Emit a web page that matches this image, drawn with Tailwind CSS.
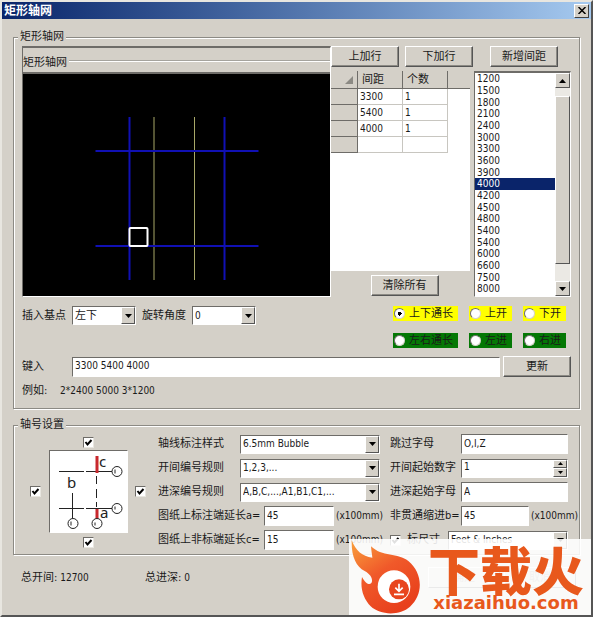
<!DOCTYPE html>
<html lang="zh-CN">

<head>
    <meta charset="UTF-8">
    <meta name="viewport" content="width=device-width, initial-scale=1.0">
    <title>矩形轴网</title>
    <script src="https://cdn.jsdelivr.net/npm/@tailwindcss/browser@4"></script>
</head>

<body class="bg-[#d4d0c8] font-['DejaVu_Sans_Condensed','Noto_Sans_CJK_SC',sans-serif] text-[10px] leading-[14px] text-[#1a1a1a]">

    <div class="relative min-h-screen flex flex-col border-2 border-t-[#e8e6e0] border-l-[#e8e6e0] border-r-[#555] border-b-[#555] overflow-hidden">

        <!-- title bar -->
        <header class="flex items-center justify-between h-[17px] pl-0.5 pr-0.5 bg-linear-to-r from-[#0a246a] to-[#a6caf0]">
            <h1 class="text-white font-bold text-[12px]">矩形轴网</h1>
            <button title="关闭" class="w-[15px] h-[14px] bg-[#d4d0c8] border border-t-white border-l-white border-r-[#404040] border-b-[#404040] flex items-center justify-center">
                <svg class="w-2 h-[7px]" viewBox="0 0 8 7" stroke="#000" stroke-width="1.5"><path d="M.5 0l7 7M7.5 0l-7 7" /></svg>
            </button>
        </header>

        <main class="px-[11px] pt-[11px]">

            <fieldset class="min-w-0 border border-[#8c8a84] shadow-[1px_1px_0_#fff,inset_1px_1px_0_#fff] px-2 pt-0.5 pb-2.5">
                <legend class="bg-[#d4d0c8] text-[11px] -ml-1 px-0.5">矩形轴网</legend>

                <div class="flex h-[251px]">
                    <!-- preview -->
                    <div class="flex-1 flex flex-col border border-t-2 border-t-[#6e6c68] border-l-[#6e6c68] border-r-white border-b-white">
                        <div class="h-[26px] flex items-end border-b-2 border-[#6e6c68] pb-0.5">
                            <span class="text-[11px]">矩形轴网</span>
                            <span class="flex-1 ml-0.5 mb-2 h-0.5 bg-[#a5a39d] border-b border-white"></span>
                        </div>
                        <svg class="flex-1 min-h-0 w-full bg-black" viewBox="0 0 306 222" fill="none">
                            <path d="M130.500 43v163M171 43v163" stroke="#a8a868" />
                            <path d="M106 43v163M201 43v163M72 77h163M72 172h163" stroke="#1010b4" stroke-width="2" />
                            <rect x="106" y="154" width="18" height="18" rx="1" fill="#000" stroke="#fff" stroke-width="2" />
                        </svg>
                    </div>

                    <div class="w-[240px] flex flex-col">
                        <div class="flex h-[25px] items-start text-[11px]">
                            <button class="w-[68px] h-[21px] border border-t-white border-l-white border-r-[#555] border-b-[#555] shadow-[inset_-1px_-1px_0_#8c8a84]">上加行</button>
                            <button class="w-[68px] h-[21px] ml-1.5 border border-t-white border-l-white border-r-[#555] border-b-[#555] shadow-[inset_-1px_-1px_0_#8c8a84]">下加行</button>
                            <button class="w-[68px] h-[21px] ml-[17px] border border-t-white border-l-white border-r-[#555] border-b-[#555] shadow-[inset_-1px_-1px_0_#8c8a84]">新增间距</button>
                        </div>
                        <div class="flex flex-1 min-h-0 justify-between">
                            <div class="w-[139px] flex flex-col items-center">
                                <div class="bg-white w-full h-[200px]">
                                    <table class="w-full table-fixed border-separate border-spacing-0 text-left">
                                        <thead>
                                            <tr class="h-[18px] bg-[#d4d0c8] text-[11px] *:font-normal *:border-b *:border-r *:border-[#6e6c68]">
                                                <th class="w-[27px]"><svg class="w-2 h-2 ml-auto mr-1" viewBox="0 0 8 8"><path d="M8 0v8H0z" fill="#8c8a84" /></svg></th>
                                                <th class="w-[45px] pl-1">间距</th>
                                                <th class="w-[45px] pl-1">个数</th>
                                                <th class="border-r-0!"></th>
                                            </tr>
                                        </thead>
                                        <tbody>
                                            <tr class="h-4 *:border-b *:border-r *:border-[#c8c6c0]">
                                                <td class="bg-[#d4d0c8] border-[#6e6c68]!"></td><td class="pl-0.5">3300</td><td class="pl-0.5">1</td><td class="border-0!"></td>
                                            </tr>
                                            <tr class="h-4 *:border-b *:border-r *:border-[#c8c6c0]">
                                                <td class="bg-[#d4d0c8] border-[#6e6c68]!"></td><td class="pl-0.5">5400</td><td class="pl-0.5">1</td><td class="border-0!"></td>
                                            </tr>
                                            <tr class="h-4 *:border-b *:border-r *:border-[#c8c6c0]">
                                                <td class="bg-[#d4d0c8] border-[#6e6c68]!"></td><td class="pl-0.5">4000</td><td class="pl-0.5">1</td><td class="border-0!"></td>
                                            </tr>
                                            <tr class="h-4 *:border-b *:border-r *:border-[#c8c6c0]">
                                                <td class="bg-[#d4d0c8] border-[#6e6c68]!"></td><td></td><td></td><td class="border-0!"></td>
                                            </tr>
                                        </tbody>
                                    </table>
                                </div>
                                <button class="w-[68px] h-[21px] mt-1 ml-2 text-[11px] border border-t-white border-l-white border-r-[#555] border-b-[#555] shadow-[inset_-1px_-1px_0_#8c8a84]">清除所有</button>
                            </div>

                            <!-- spacing list -->
                            <div class="w-[97px] flex bg-white border border-t-2 border-t-[#6e6c68] border-l-[#6e6c68] border-r-white border-b-white">
                                <select size="19" aria-label="间距" class="flex-1 min-w-0 h-full p-0 overflow-hidden appearance-none outline-none leading-[12px] *:h-3 *:nth-[3n]:h-[11px] *:min-h-0 *:p-0 *:pl-0.5">
                                    <option>1200</option>
                                    <option>1500</option>
                                    <option>1800</option>
                                    <option>2100</option>
                                    <option>2400</option>
                                    <option>3000</option>
                                    <option>3300</option>
                                    <option>3600</option>
                                    <option>3900</option>
                                    <option class="bg-[#0a246a] text-white">4000</option>
                                    <option>4200</option>
                                    <option>4500</option>
                                    <option>4800</option>
                                    <option>5400</option>
                                    <option>5400</option>
                                    <option>6000</option>
                                    <option>6600</option>
                                    <option>7500</option>
                                    <option>8000</option>
                                </select>
                                <div class="w-[15px] flex flex-col bg-[#ebe9e4]">
                                    <button aria-label="向上" class="h-[15px] flex items-center justify-center bg-[#d4d0c8] border border-t-white border-l-white border-r-[#555] border-b-[#555]"><svg class="w-[7px] h-1" viewBox="0 0 7 4"><path d="M3.500 0L7 4H0z" /></svg></button>
                                    <div class="h-[168px] mt-2 bg-[#d4d0c8] border border-t-white border-l-white border-r-[#555] border-b-[#555]"></div>
                                    <button aria-label="向下" class="h-[15px] mt-auto flex items-center justify-center bg-[#d4d0c8] border border-t-white border-l-white border-r-[#555] border-b-[#555]"><svg class="w-[7px] h-1" viewBox="0 0 7 4"><path d="M0 0h7L3.500 4z" /></svg></button>
                                </div>
                            </div>
                        </div>
                    </div>
                </div>

                <div class="flex justify-between mt-[9px]">
                    <div class="flex items-center h-[19px] text-[11px]">
                        <label for="basePoint" class="w-[50px]">插入基点</label>
                        <div class="relative w-16 h-[19px]">
                            <select id="basePoint" class="appearance-none w-full h-full pl-0.5 bg-white border border-t-[#6e6c68] border-l-[#6e6c68] border-r-white border-b-white"><option>左下</option></select>
                            <span class="absolute right-px top-px bottom-px w-3.5 bg-[#d4d0c8] border border-t-white border-l-white border-r-[#555] border-b-[#555] flex items-center justify-center pointer-events-none"><svg class="w-[7px] h-1" viewBox="0 0 7 4"><path d="M0 0h7L3.500 4z" /></svg></span>
                        </div>
                        <label for="angle" class="w-[50px] ml-1.5">旋转角度</label>
                        <div class="relative w-16 h-[19px]">
                            <select id="angle" class="appearance-none w-full h-full pl-0.5 text-[10px] bg-white border border-t-[#6e6c68] border-l-[#6e6c68] border-r-white border-b-white"><option>0</option></select>
                            <span class="absolute right-px top-px bottom-px w-3.5 bg-[#d4d0c8] border border-t-white border-l-white border-r-[#555] border-b-[#555] flex items-center justify-center pointer-events-none"><svg class="w-[7px] h-1" viewBox="0 0 7 4"><path d="M0 0h7L3.500 4z" /></svg></span>
                        </div>
                    </div>

                    <div class="grid grid-cols-[65px_43px_43px] gap-y-3 w-[173px] mr-[5px] text-[11px] *:h-[15px] *:flex *:items-center *:gap-1 *:pl-px *:whitespace-nowrap justify-between">
                        <label class="bg-[#ffff00]"><input type="radio" name="dir" checked class="appearance-none w-[11px] h-[11px] rounded-full bg-white border border-t-[#6e6c68] border-l-[#6e6c68] border-r-[#d4d0c8] border-b-[#d4d0c8] checked:bg-[radial-gradient(#000_2px,#fff_2px)]">上下通长</label>
                        <label class="bg-[#ffff00]"><input type="radio" name="dir" class="appearance-none w-[11px] h-[11px] rounded-full bg-white border border-t-[#6e6c68] border-l-[#6e6c68] border-r-[#d4d0c8] border-b-[#d4d0c8] checked:bg-[radial-gradient(#000_2px,#fff_2px)]">上开</label>
                        <label class="bg-[#ffff00]"><input type="radio" name="dir" class="appearance-none w-[11px] h-[11px] rounded-full bg-white border border-t-[#6e6c68] border-l-[#6e6c68] border-r-[#d4d0c8] border-b-[#d4d0c8] checked:bg-[radial-gradient(#000_2px,#fff_2px)]">下开</label>
                        <label class="bg-[#047804]"><input type="radio" name="dir" class="appearance-none w-[11px] h-[11px] rounded-full bg-white border border-t-[#6e6c68] border-l-[#6e6c68] border-r-[#d4d0c8] border-b-[#d4d0c8] checked:bg-[radial-gradient(#000_2px,#fff_2px)]">左右通长</label>
                        <label class="bg-[#047804]"><input type="radio" name="dir" class="appearance-none w-[11px] h-[11px] rounded-full bg-white border border-t-[#6e6c68] border-l-[#6e6c68] border-r-[#d4d0c8] border-b-[#d4d0c8] checked:bg-[radial-gradient(#000_2px,#fff_2px)]">左进</label>
                        <label class="bg-[#047804]"><input type="radio" name="dir" class="appearance-none w-[11px] h-[11px] rounded-full bg-white border border-t-[#6e6c68] border-l-[#6e6c68] border-r-[#d4d0c8] border-b-[#d4d0c8] checked:bg-[radial-gradient(#000_2px,#fff_2px)]">右进</label>
                    </div>
                </div>

                <div class="flex items-center mt-2 text-[11px]">
                    <label for="entry" class="w-[50px]">键入</label>
                    <input id="entry" type="text" value="3300 5400 4000" class="flex-1 min-w-0 h-5 pl-0.5 pb-0.5 text-[10px] bg-white border border-t-[#6e6c68] border-l-[#6e6c68] border-r-white border-b-white">
                    <button class="w-[68px] h-[21px] ml-[3px] border border-t-white border-l-white border-r-[#555] border-b-[#555] shadow-[inset_-1px_-1px_0_#8c8a84]">更新</button>
                </div>

                <p class="flex items-center mt-[7px]"><span class="w-[38px] text-[11px]">例如:</span>2*2400 5000 3*1200</p>
            </fieldset>

            <fieldset class="min-w-0 mt-[9px] border border-[#8c8a84] shadow-[1px_1px_0_#fff,inset_1px_1px_0_#fff] pl-4 pr-0.5 pt-0.5 pb-[3px]">
                <legend class="bg-[#d4d0c8] text-[11px] -ml-3 px-0.5">轴号设置</legend>

                <div class="grid grid-cols-[118px_minmax(0,222fr)_minmax(0,187fr)] gap-x-[10px]">
                    <!-- which sides carry a bubble -->
                    <div class="grid grid-cols-[auto_auto_auto] grid-rows-[15px_83px_18px] justify-between justify-items-center items-center w-[116px] pt-px">
                        <label class="relative col-start-2 w-[11px] h-[11px]"><input type="checkbox" checked aria-label="上" class="peer appearance-none block w-[11px] h-[11px] bg-white border border-t-[#6e6c68] border-l-[#6e6c68] border-r-[#e8e6e0] border-b-[#e8e6e0]"><svg class="absolute inset-0 w-[11px] h-[11px] hidden peer-checked:block" viewBox="0 0 11 11" fill="none" stroke="#000" stroke-width="2"><path d="M2.500 5l2 2.500 4-4.500" /></svg></label>
                        <label class="relative row-start-2 col-start-1 w-[11px] h-[11px]"><input type="checkbox" checked aria-label="左" class="peer appearance-none block w-[11px] h-[11px] bg-white border border-t-[#6e6c68] border-l-[#6e6c68] border-r-[#e8e6e0] border-b-[#e8e6e0]"><svg class="absolute inset-0 w-[11px] h-[11px] hidden peer-checked:block" viewBox="0 0 11 11" fill="none" stroke="#000" stroke-width="2"><path d="M2.500 5l2 2.500 4-4.500" /></svg></label>
                        <div class="row-start-2 col-start-2 w-[79px] h-[83px] bg-white border border-t-[#6e6c68] border-l-[#6e6c68] border-r-white border-b-white">
                            <svg class="w-full h-full font-['Noto_Sans'] text-[15px]" viewBox="0 0 77 81" fill="none" stroke="#222">
                                <path d="M9 20.500h25M36 20.500h26M9 57.500h25M36 57.500h26M22.500 42v25M46.500 25v8M46.500 38v9M46.500 51v5" />
                                <path d="M47 5v17M47 58v10" stroke="#c8282d" stroke-width="3" />
                                <g fill="#fff">
                                    <circle cx="67" cy="20.500" r="5" />
                                    <circle cx="67" cy="57.500" r="5" />
                                    <circle cx="23" cy="72.500" r="5" />
                                    <circle cx="47" cy="72.500" r="5" />
                                </g>
                                <path d="M65 18.500v4M65 55.500v3M21 70.500v4M45 71.500v3" />
                                <g fill="#222" stroke="none">
                                    <text x="17" y="37">b</text>
                                    <text x="49" y="16">c</text>
                                    <text x="50" y="67">a</text>
                                </g>
                            </svg>
                        </div>
                        <label class="relative row-start-2 col-start-3 w-[11px] h-[11px]"><input type="checkbox" checked aria-label="右" class="peer appearance-none block w-[11px] h-[11px] bg-white border border-t-[#6e6c68] border-l-[#6e6c68] border-r-[#e8e6e0] border-b-[#e8e6e0]"><svg class="absolute inset-0 w-[11px] h-[11px] hidden peer-checked:block" viewBox="0 0 11 11" fill="none" stroke="#000" stroke-width="2"><path d="M2.500 5l2 2.500 4-4.500" /></svg></label>
                        <label class="relative row-start-3 col-start-2 w-[11px] h-[11px]"><input type="checkbox" checked aria-label="下" class="peer appearance-none block w-[11px] h-[11px] bg-white border border-t-[#6e6c68] border-l-[#6e6c68] border-r-[#e8e6e0] border-b-[#e8e6e0]"><svg class="absolute inset-0 w-[11px] h-[11px] hidden peer-checked:block" viewBox="0 0 11 11" fill="none" stroke="#000" stroke-width="2"><path d="M2.500 5l2 2.500 4-4.500" /></svg></label>
                    </div>

                    <div class="flex flex-col gap-1 *:flex *:items-center *:h-5 whitespace-nowrap">
                        <div>
                            <label for="style" class="w-[82px] text-[11px]">轴线标注样式</label>
                            <div class="relative flex-1 h-[19px]">
                                <select id="style" class="appearance-none w-full h-full pl-0.5 bg-white border border-t-[#6e6c68] border-l-[#6e6c68] border-r-white border-b-white"><option>6.5mm Bubble</option></select>
                                <span class="absolute right-px top-px bottom-px w-3.5 bg-[#d4d0c8] border border-t-white border-l-white border-r-[#555] border-b-[#555] flex items-center justify-center pointer-events-none"><svg class="w-[7px] h-1" viewBox="0 0 7 4"><path d="M0 0h7L3.500 4z" /></svg></span>
                            </div>
                        </div>
                        <div>
                            <label for="bayRule" class="w-[82px] text-[11px]">开间编号规则</label>
                            <div class="relative flex-1 h-[19px]">
                                <select id="bayRule" class="appearance-none w-full h-full pl-0.5 bg-white border border-t-[#6e6c68] border-l-[#6e6c68] border-r-white border-b-white"><option>1,2,3,...</option></select>
                                <span class="absolute right-px top-px bottom-px w-3.5 bg-[#d4d0c8] border border-t-white border-l-white border-r-[#555] border-b-[#555] flex items-center justify-center pointer-events-none"><svg class="w-[7px] h-1" viewBox="0 0 7 4"><path d="M0 0h7L3.500 4z" /></svg></span>
                            </div>
                        </div>
                        <div>
                            <label for="depthRule" class="w-[82px] text-[11px]">进深编号规则</label>
                            <div class="relative flex-1 h-[19px]">
                                <select id="depthRule" class="appearance-none w-full h-full pl-0.5 bg-white border border-t-[#6e6c68] border-l-[#6e6c68] border-r-white border-b-white"><option>A,B,C,...,A1,B1,C1,...</option></select>
                                <span class="absolute right-px top-px bottom-px w-3.5 bg-[#d4d0c8] border border-t-white border-l-white border-r-[#555] border-b-[#555] flex items-center justify-center pointer-events-none"><svg class="w-[7px] h-1" viewBox="0 0 7 4"><path d="M0 0h7L3.500 4z" /></svg></span>
                            </div>
                        </div>
                        <div>
                            <label for="extA" class="w-[106px] text-[11px]">图纸上标注端延长a=</label>
                            <input id="extA" type="text" value="45" class="flex-1 min-w-0 h-5 pl-0.5 pb-0.5 bg-white border border-t-[#6e6c68] border-l-[#6e6c68] border-r-white border-b-white">
                            <span class="w-[46px] pl-0.5">(x100mm)</span>
                        </div>
                        <div>
                            <label for="extC" class="w-[106px] text-[11px]">图纸上非标端延长c=</label>
                            <input id="extC" type="text" value="15" class="flex-1 min-w-0 h-5 pl-0.5 pb-0.5 bg-white border border-t-[#6e6c68] border-l-[#6e6c68] border-r-white border-b-white">
                            <span class="w-[46px] pl-0.5">(x100mm)</span>
                        </div>
                    </div>

                    <div class="flex flex-col gap-1 *:flex *:items-center *:h-5 whitespace-nowrap">
                        <div class="pr-[9px]">
                            <label for="skip" class="w-[71px] text-[11px]">跳过字母</label>
                            <input id="skip" type="text" value="O,I,Z" class="flex-1 min-w-0 h-5 pl-0.5 pb-0.5 bg-white border border-t-[#6e6c68] border-l-[#6e6c68] border-r-white border-b-white">
                        </div>
                        <div class="pr-[9px]">
                            <label for="bayStart" class="w-[71px] text-[11px]">开间起始数字</label>
                            <div class="flex flex-1 min-w-0 h-[19px] bg-white border border-t-[#6e6c68] border-l-[#6e6c68] border-r-white border-b-white">
                                <input id="bayStart" type="text" value="1" class="flex-1 min-w-0 pl-0.5 pb-0.5">
                                <div class="w-3.5 flex flex-col">
                                    <button aria-label="增加" class="flex-1 bg-[#d4d0c8] border border-t-white border-l-white border-r-[#555] border-b-[#555] flex items-center justify-center"><svg class="w-[5px] h-[3px]" viewBox="0 0 5 3"><path d="M2.500 0L5 3H0z" /></svg></button>
                                    <button aria-label="减少" class="flex-1 bg-[#d4d0c8] border border-t-white border-l-white border-r-[#555] border-b-[#555] flex items-center justify-center"><svg class="w-[5px] h-[3px]" viewBox="0 0 5 3"><path d="M0 0h5L2.500 3z" /></svg></button>
                                </div>
                            </div>
                        </div>
                        <div class="pr-[9px]">
                            <label for="depthStart" class="w-[71px] text-[11px]">进深起始字母</label>
                            <input id="depthStart" type="text" value="A" class="flex-1 min-w-0 h-5 pl-0.5 pb-0.5 bg-white border border-t-[#6e6c68] border-l-[#6e6c68] border-r-white border-b-white">
                        </div>
                        <div>
                            <label for="indentB" class="w-[71px] text-[11px]">非贯通缩进b=</label>
                            <input id="indentB" type="text" value="45" class="flex-1 min-w-0 h-5 pl-0.5 pb-0.5 bg-white border border-t-[#6e6c68] border-l-[#6e6c68] border-r-white border-b-white">
                            <span class="w-[48px] pl-0.5">(x100mm)</span>
                        </div>
                        <div class="pr-[9px]">
                            <label class="relative w-[58px] flex items-center gap-1.5 text-[11px]"><input type="checkbox" checked class="peer appearance-none block w-[11px] h-[11px] bg-white border border-t-[#6e6c68] border-l-[#6e6c68] border-r-[#e8e6e0] border-b-[#e8e6e0]"><svg class="absolute left-0 w-[11px] h-[11px] hidden peer-checked:block" viewBox="0 0 11 11" fill="none" stroke="#000" stroke-width="2"><path d="M2.500 5l2 2.500 4-4.500" /></svg>标尺寸</label>
                            <div class="relative flex-1 h-[19px]">
                                <select aria-label="单位" class="appearance-none w-full h-full pl-0.5 bg-white border border-t-[#6e6c68] border-l-[#6e6c68] border-r-white border-b-white"><option>Feet &amp; Inches</option></select>
                                <span class="absolute right-px top-px bottom-px w-3.5 bg-[#d4d0c8] border border-t-white border-l-white border-r-[#555] border-b-[#555] flex items-center justify-center pointer-events-none"><svg class="w-[7px] h-1" viewBox="0 0 7 4"><path d="M0 0h7L3.500 4z" /></svg></span>
                            </div>
                        </div>
                    </div>
                </div>
            </fieldset>

            <div class="flex items-center mt-3 pl-2 h-[21px]">
                <p class="w-[124px]"><span class="text-[11px]">总开间:</span> 12700</p>
                <p><span class="text-[11px]">总进深:</span> 0</p>
                <div class="flex gap-1 ml-auto mr-1 text-[11px] text-[#8c8a84]">
                    <button class="w-[72px] h-[21px] border border-t-white border-l-white border-r-[#555] border-b-[#555]">确定</button>
                    <button class="w-[72px] h-[21px] border border-t-white border-l-white border-r-[#555] border-b-[#555]">取消</button>
                </div>
            </div>
        </main>

        <!-- site badge -->
        <div class="absolute right-0 bottom-0 w-[242px] h-[76px] flex bg-white/88 text-[#e8581c]">
            <svg class="w-[72px] h-[76px] shrink-0 overflow-visible" viewBox="27 42 216 228">
                <defs>
                    <linearGradient id="flame" x1="0" y1="0" x2=".6" y2="1">
                        <stop offset="0" stop-color="#f9a03c" />
                        <stop offset=".5" stop-color="#f0592a" />
                        <stop offset="1" stop-color="#e8401c" />
                    </linearGradient>
                </defs>
                <path fill="url(#flame)" d="M35 46C34 95 48 124 74 138C90 147 97 158 96 169C94 181 80 182 66 156C60 190 70 220 92 244C122 272 180 272 210 245C250 210 250 145 205 108C175 84 125 96 93 64C94 78 96 88 97 98C66 94 48 78 35 46Z" />
                <circle cx="162" cy="185" r="49" fill="#fff" />
                <circle cx="177" cy="193" r="30" fill="#e8451e" />
                <path d="M177 176v20M166 188l11 11 11-11M162 208h30" fill="none" stroke="#fff" stroke-width="5" />
            </svg>
            <div class="flex flex-col items-center flex-1 whitespace-nowrap">
                <p class="mt-1.5 font-['Noto_Sans_CJK_SC',sans-serif] font-black text-[52px] leading-[48px]">下载火</p>
                <p class="font-['DejaVu_Sans',sans-serif] font-bold text-[18px] leading-[20px]">xiazaihuo.com</p>
            </div>
        </div>
    </div>

</body>

</html>
